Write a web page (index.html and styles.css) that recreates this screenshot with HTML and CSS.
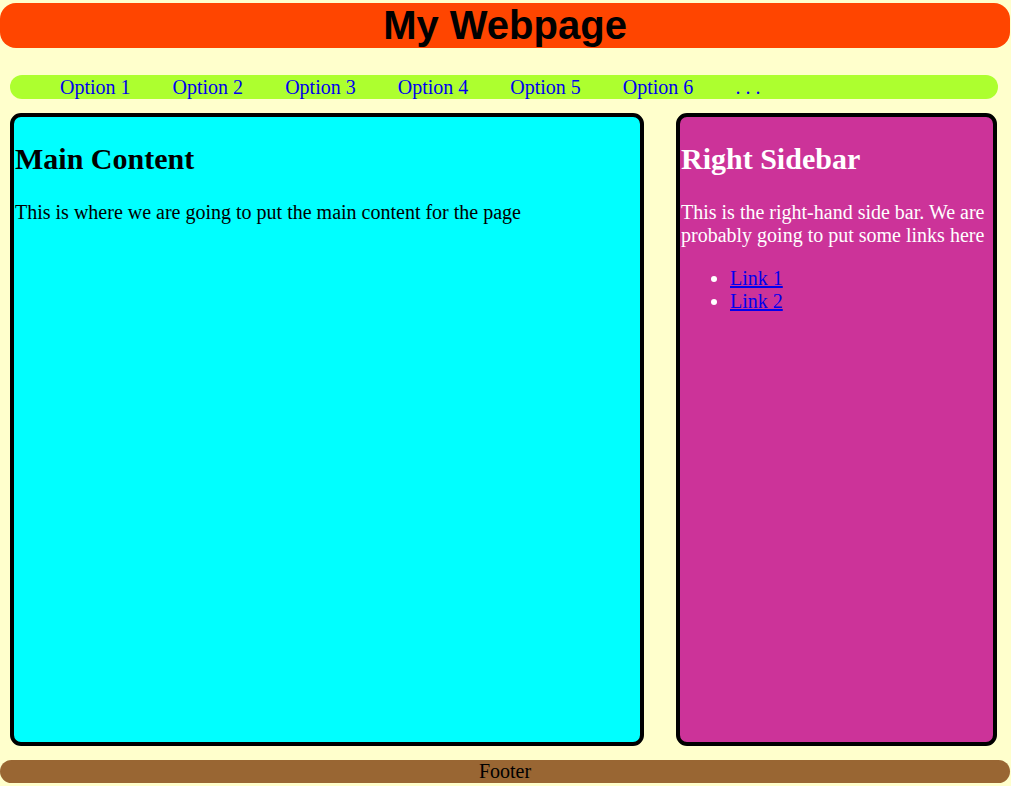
FILE: index.html
```html
<!DOCTYPE html>
<html>
<head>
<meta charset="utf-8">
<title>My Webpage</title>
<link rel="stylesheet" href="styles.css">
</head>
<body>
<div class="page">
  <header class="site-header">
    <h1 class="site-title">My Webpage</h1>
  </header>
  <nav class="site-nav">
    <ul class="nav-list">
      <li><a href="#">Option 1</a></li>
      <li><a href="#">Option 2</a></li>
      <li><a href="#">Option 3</a></li>
      <li><a href="#">Option 4</a></li>
      <li><a href="#">Option 5</a></li>
      <li><a href="#">Option 6</a></li>
      <li><a href="#">. . .</a></li>
    </ul>
  </nav>
  <div class="columns">
    <main class="main-content">
      <h2>Main Content</h2>
      <p>This is where we are going to put the main content for the page</p>
    </main>
    <aside class="sidebar">
      <h2>Right Sidebar</h2>
      <p>This is the right-hand side bar. We are probably going to put some links here</p>
      <ul class="links">
        <li><a href="#">Link 1</a></li>
        <li><a href="#">Link 2</a></li>
      </ul>
    </aside>
  </div>
  <footer class="site-footer">Footer</footer>
</div>
</body>
</html>
```

FILE: styles.css
```css
html, body {
  margin: 0;
  padding: 0;
  background: #ffffcc;
}

body {
  font-family: "Liberation Serif", "Times New Roman", serif;
  font-size: 20px;
  line-height: 23px;
  color: #000;
}

.page {
  display: flex;
  flex-direction: column;
  padding-top: 3px;
}

.site-header {
  width: 1010px;
  height: 45px;
  background: #ff4500;
  border-radius: 16px;
}

.site-title {
  margin: 0;
  font-family: "Liberation Sans", Arial, sans-serif;
  font-size: 40px;
  line-height: 45px;
  font-weight: bold;
  text-align: center;
}

.site-nav {
  margin: 27px 0 0 10px;
  width: 988px;
  height: 24px;
  background: #adff2f;
  border-radius: 12px;
}

.nav-list {
  list-style: none;
  margin: 0;
  padding: 0 0 0 50px;
  display: flex;
  gap: 42px;
  line-height: 24px;
}

.nav-list a {
  color: #0000ee;
  text-decoration: none;
}

.columns {
  display: flex;
  margin: 14px 0 0 10px;
  gap: 32px;
}

.main-content,
.sidebar {
  box-sizing: border-box;
  height: 633px;
  border: 4px solid #000;
  border-radius: 11px;
  padding: 0 0 0 1px;
}

.main-content {
  width: 634px;
  background: #00ffff;
}

.sidebar {
  width: 321px;
  background: #cc3399;
  color: #fff;
}

h2 {
  font-size: 30px;
  line-height: 34px;
  font-weight: bold;
  margin: 25px 0;
}

p {
  margin: 20px 0;
}

.links {
  margin: 20px 0;
  padding-left: 49px;
}

.links a {
  color: #0000ee;
}

.site-footer {
  margin-top: 14px;
  width: 1010px;
  height: 23px;
  background: #996633;
  border-radius: 12px;
  text-align: center;
  line-height: 23px;
}
```
